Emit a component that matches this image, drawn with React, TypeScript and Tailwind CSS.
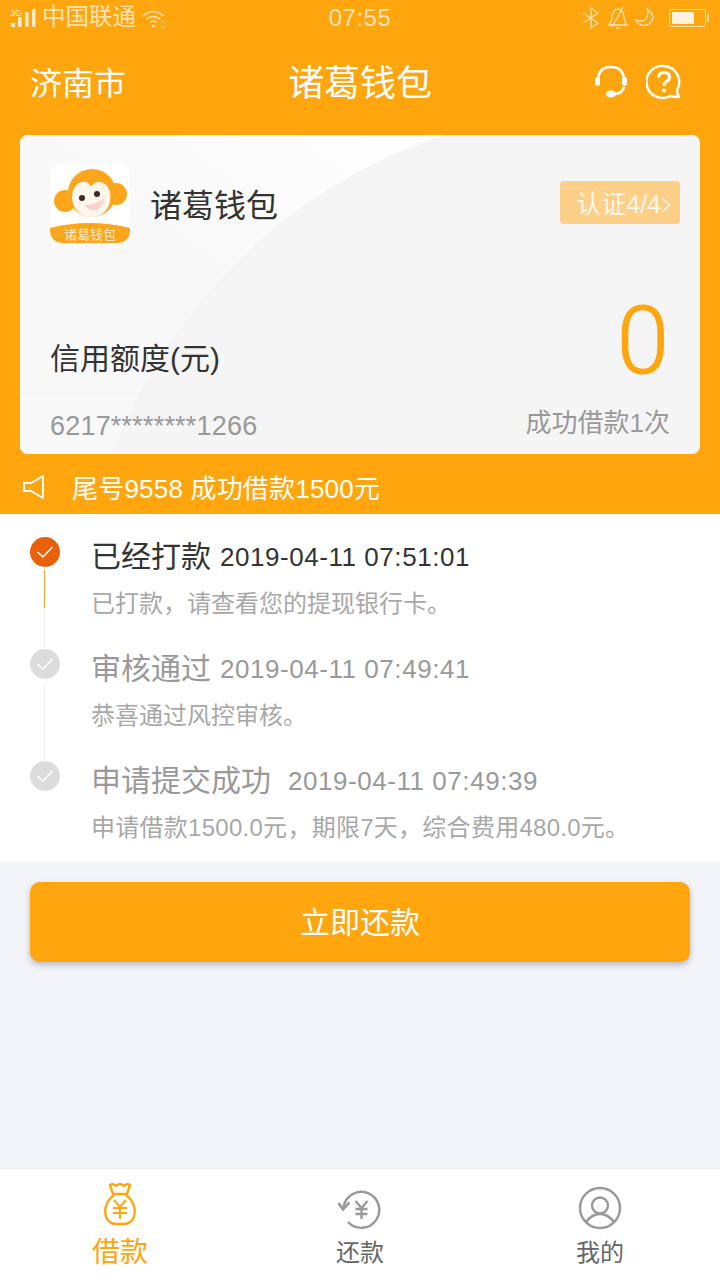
import React from "react";

const font = { fontFamily: '"Liberation Sans", "Noto Sans CJK SC", sans-serif' };

const Check = () => (
  <svg width="18" height="14" viewBox="0 0 18 14" fill="none">
    <path d="M1.5 7 L7 12 L16.5 2" stroke="#fff" strokeWidth="1.5" />
  </svg>
);

const Logo = () => (
  <div className="relative w-[80px] h-[80px] rounded-xl bg-white overflow-hidden shrink-0">
    <svg width="80" height="80" viewBox="0 0 80 80" className="absolute left-0 top-0">
      <circle cx="15" cy="38" r="11" fill="#fba61c" />
      <circle cx="66" cy="31" r="11" fill="#fba61c" />
      <circle cx="42" cy="30" r="24" fill="#fba61c" />
      <path d="M33 9 Q40 7 44 12 L36 14 Z" fill="#fba61c" />
      <path d="M41 24 C38 15 22 17 22 35 C23 49 34 55 44 54 C55 53 62 42 60 30 C59 19 45 15 41 24 Z" fill="#fdf6ec" />
      <circle cx="32" cy="35" r="3" fill="#3a2a20" />
      <circle cx="47" cy="31" r="3" fill="#3a2a20" />
      <path d="M35 42 Q46 41 54 36 Q54 46 44 47 Q38 48 35 42 Z" fill="#f9d3cc" />
      <path d="M0 65 Q40 55 80 65 L80 68 Q80 80 68 80 L12 80 Q0 80 0 68 Z" fill="#fba61c" />
    </svg>
    <div className="absolute left-0 right-0 bottom-[0px] text-center text-[13px] leading-[17px] text-[#fde9c8]">诸葛钱包</div>
  </div>
);

type StepProps = { title: string; time: string; desc: string; active?: boolean; last?: boolean; gap: string; descCls?: string };

const Step = ({ title, time, desc, active, last, gap, descCls }: StepProps) => (
  <div className="flex h-[112px]">
    <div className="relative w-[91px] shrink-0">
      <div className={`absolute left-[30px] top-[23px] w-[30px] h-[30px] rounded-full flex items-center justify-center ${active ? "bg-[#e8600a]" : "bg-[#dcdcdc]"}`}>
        <Check />
      </div>
      {!last && <div className="absolute left-[44px] top-[56px] w-px h-[78px] bg-[#f3f3f3]" />}
      {active && <div className="absolute left-[44px] top-[56px] w-px h-[38px] bg-[#eeaa33]" />}
    </div>
    <div>
      <div className={`flex items-center h-[36px] mt-[25px] ${active ? "text-[#333]" : "text-[#999]"}`}>
        <span className="text-[30px] leading-[36px]">{title}</span>
        <span className={`text-[26px] leading-[36px] tracking-[0.55px] ${gap}`}>{time}</span>
      </div>
      <div className={`text-[24px] leading-[30px] mt-[14px] text-[#a8a8a8] ${descCls ?? ""}`}>{desc}</div>
    </div>
  </div>
);

export default function App() {
  return (
    <div className="w-[720px] h-[1280px] flex flex-col bg-[#f2f4f9] overflow-hidden" style={font}>
      <div className="bg-[#ffa50d] h-[514px] flex flex-col shrink-0">
        {/* status bar */}
        <div className="relative h-[40px] flex items-center pl-[10px] pr-[11px] pb-[4px] text-[#fde3b4]">
          <svg width="27" height="20" viewBox="0 0 27 20" fill="#ffeccb">
            <text x="0" y="7.5" fontSize="9" fontFamily="Liberation Sans">3G</text>
            <rect x="1" y="15" width="4" height="4" />
            <rect x="8" y="9" width="3.5" height="10" />
            <rect x="15" y="4" width="3.5" height="15" />
            <rect x="22" y="1" width="3.5" height="18" />
          </svg>
          <span className="ml-[5px] text-[23.5px]">中国联通</span>
          <svg width="24" height="20" viewBox="0 0 24 20" fill="none" stroke="#fde3b4" strokeWidth="1.3" className="ml-[6px] mt-[2px]">
            <path d="M1 7 Q11 -2 22 7" />
            <path d="M4.5 10.5 Q11 4.5 18.5 10.5" />
            <path d="M8 13.5 Q11 11 15 13.5" />
            <circle cx="11.5" cy="17" r="1.6" fill="#fde3b4" stroke="none" />
            <path d="M19 14 L21 12 L23 14 M19 17 L21 19 L23 17" strokeWidth="0.9" />
          </svg>
          <span className="absolute left-0 right-0 text-center text-[24px] tracking-[0.5px]">07:55</span>
          <div className="ml-auto flex items-center">
            <svg width="18" height="22" viewBox="0 0 18 22" fill="none" stroke="#fde3b4" strokeWidth="1.3">
              <path d="M1 6 L16 16 L9 21 L9 1 L16 6 L1 16" />
            </svg>
            <svg width="20" height="24" viewBox="0 0 20 24" fill="none" stroke="#fde3b4" strokeWidth="1.3" className="ml-[8px]">
              <path d="M1 19 Q4 16 4 10 Q5 4 10 3 Q15 4 16 10 Q16 16 19 19 Z" />
              <path d="M4 21 L15 1" />
              <path d="M8 22 L12 22" />
            </svg>
            <svg width="20" height="20" viewBox="0 0 20 20" fill="none" stroke="#fde3b4" strokeWidth="1.3" className="ml-[7px]">
              <path d="M12 1 Q20 6 17 13 Q12 20 4 16 Q1 14 1 12 Q9 15 12 9 Q14 5 12 1 Z" />
            </svg>
            <div className="ml-[14px] w-[37px] h-[18px] border border-[#fde3b4] rounded-[2px] p-[2px]">
              <div className="w-[22px] h-full bg-[#fff3dc]" />
            </div>
            <div className="ml-[1px] w-[2px] h-[8px] bg-[#fde3b4]" />
          </div>
        </div>

        {/* header */}
        <div className="relative h-[95px] flex items-center pl-[30px] pr-[38px] pb-[8px] text-white">
          <span className="text-[32px]">济南市</span>
          <span className="absolute left-0 right-0 text-center text-[36px]">诸葛钱包</span>
          <div className="ml-auto mb-[4px] flex items-center gap-[18px]">
            <svg width="34" height="34" viewBox="0 0 34 34" fill="none" stroke="#fff" strokeWidth="2.6">
              <path d="M4 16 Q4 2 17 2 Q30 2 30 16" />
              <path d="M30 22 Q29 28 21 29" />
              <rect x="1" y="12" width="5" height="9" rx="2.5" fill="#fff" stroke="none" />
              <rect x="28" y="12" width="5" height="9" rx="2.5" fill="#fff" stroke="none" />
              <ellipse cx="17" cy="29" rx="5" ry="3.4" fill="#fff" stroke="none" />
            </svg>
            <svg width="36" height="36" viewBox="0 0 36 36" fill="none" stroke="#fff" strokeWidth="2.4">
              <path d="M18 2 A16 16 0 1 0 24 32 Q29 33 33 33 Q31 29 31 26 A16 16 0 0 0 18 2 Z" strokeLinejoin="round" />
              <path d="M12.5 13.5 Q13 8.5 18 8.5 Q23.5 8.5 23.5 13 Q23.5 16 20 18 Q18 19 18 22" strokeWidth="3" />
              <circle cx="18" cy="26.5" r="2" fill="#fff" stroke="none" />
            </svg>
          </div>
        </div>

        {/* card */}
        <div className="relative mx-[20px] h-[319px] rounded-[8px] bg-[#f5f5f5] overflow-hidden">
          <svg width="680" height="319" viewBox="0 0 680 319" className="absolute left-0 top-0">
            <defs>
              <linearGradient id="sheen" x1="0" y1="1" x2="1" y2="0">
                <stop offset="0" stopColor="#f8f8f9" />
                <stop offset="0.5" stopColor="#f8f8f9" />
                <stop offset="1" stopColor="#ffffff" />
              </linearGradient>
            </defs>
            <path d="M0 0 L425 0 C270 50 150 170 92 319 L0 319 Z" fill="url(#sheen)" />
          </svg>
          <div className="relative h-full">
            <div className="flex items-center pl-[30px] pt-[28px] pr-[20px]">
              <Logo />
              <span className="ml-[20px] pt-[5px] text-[32px] text-[#333]">诸葛钱包</span>
              <div className="ml-auto w-[120px] h-[43px] rounded-[4px] bg-[#fdcf87] flex items-center justify-end pt-[4px] pr-[8px] text-[25px] text-[#fff8ec] self-start mt-[18px]">
                <span>认证4/4</span>
                <svg width="11" height="20" viewBox="0 0 11 20" fill="none" stroke="#fff8ec" strokeWidth="1.4">
                  <path d="M1 3 L9 10 L1 17" />
                </svg>
              </div>
            </div>
            <div className="absolute left-[30px] top-[204px] text-[30px] leading-[40px] text-[#333]">信用额度(元)</div>
            <div className="absolute right-[31px] top-[151px] font-['Roboto'] font-light [-webkit-text-stroke:1px_#ffa50d] text-[94px] leading-[110px] text-[#ffa50d]">0</div>
            <div className="absolute left-0 top-[258px] w-[130px] h-px bg-[#f2f2f2]" />
            <div className="absolute left-[30px] top-[273px] text-[27px] leading-[36px] tracking-[0.2px] text-[#999]">6217********1266</div>
            <div className="absolute right-[30px] top-[270px] text-[26px] leading-[36px] text-[#999]">成功借款1次</div>
          </div>
        </div>

        {/* notice */}
        <div className="flex items-center h-[60px] pl-[23px] pt-[6px] text-white">
          <svg width="22" height="26" viewBox="0 0 22 26" fill="none" stroke="#fff" strokeWidth="2">
            <path d="M20 2 L20 24 L8 17 L1 17 L1 9 L8 9 Z" strokeLinejoin="round" />
          </svg>
          <span className="ml-[27px] pt-[4px] text-[26px] tracking-[0.2px]">尾号9558 成功借款1500元</span>
        </div>
      </div>

      {/* progress */}
      <div className="bg-white h-[348px] shrink-0 flex flex-col">
        <Step active title="已经打款" time="2019-04-11 07:51:01" desc="已打款，请查看您的提现银行卡。" gap="ml-[9px]" />
        <Step title="审核通过" time="2019-04-11 07:49:41" desc="恭喜通过风控审核。" gap="ml-[9px]" />
        <Step last title="申请提交成功" time="2019-04-11 07:49:39" desc="申请借款1500.0元，期限7天，综合费用480.0元。" gap="ml-[17px]" descCls="tracking-[0.27px]" />
      </div>

      <div className="flex-1 px-[30px] pt-[20px]">
        <div className="h-[80px] rounded-[10px] bg-[#ffa50d] shadow-[0_3px_6px_rgba(0,0,0,0.25)] flex items-center justify-center text-white text-[30px]">
          立即还款
        </div>
      </div>

      {/* tab bar */}
      <div className="h-[112px] bg-white border-t border-[#ececec] shrink-0 grid grid-cols-3 text-center">
        <div className="flex flex-col items-center text-[#ffa50d] pt-[13px]">
          <svg width="34" height="44" viewBox="0 0 34 44" fill="none" stroke="#ffa50d" strokeWidth="2.4">
            <path d="M7 3 Q10 1 13 4 Q17 0 21 4 Q24 1 27 3 L24 12 L10 12 Z" strokeLinejoin="round" />
            <path d="M11 13 C-2 22 0 42 13 42 L21 42 C34 42 36 22 23 13" />
            <path d="M11 18 L17 25 L23 18 M17 25 L17 37 M10 26 L24 26 M10 31 L24 31" strokeWidth="2" />
          </svg>
          <span className="text-[28px] leading-[34px] mt-[10px]">借款</span>
        </div>
        <div className="flex flex-col items-center text-[#666] pt-[21px]">
          <svg width="46" height="44" viewBox="8 10 46 44" fill="none" stroke="#999" strokeWidth="2.4">
            <path d="M14.5 27 A18 18 0 1 1 19 42" />
            <path d="M9.5 23 L14 29.5 L20.5 22.5" strokeWidth="2.6" />
            <path d="M26.5 21 L32.5 28 L38.5 21 M32.5 28 L32.5 39 M26.5 29 L38.5 29 M26.5 34 L38.5 34" strokeWidth="2.4" />
          </svg>
          <span className="text-[24px] leading-[30px] mt-[4px]">还款</span>
        </div>
        <div className="flex flex-col items-center text-[#666] pt-[17px]">
          <svg width="44" height="44" viewBox="8 3 44 44" fill="none" stroke="#999" strokeWidth="2.4">
            <circle cx="30" cy="25" r="20" />
            <circle cx="30" cy="22.5" r="8" />
            <path d="M16 39 Q22 31 30 31 Q38 31 44 39" />
          </svg>
          <span className="text-[24px] leading-[30px] mt-[8px]">我的</span>
        </div>
      </div>
    </div>
  );
}
